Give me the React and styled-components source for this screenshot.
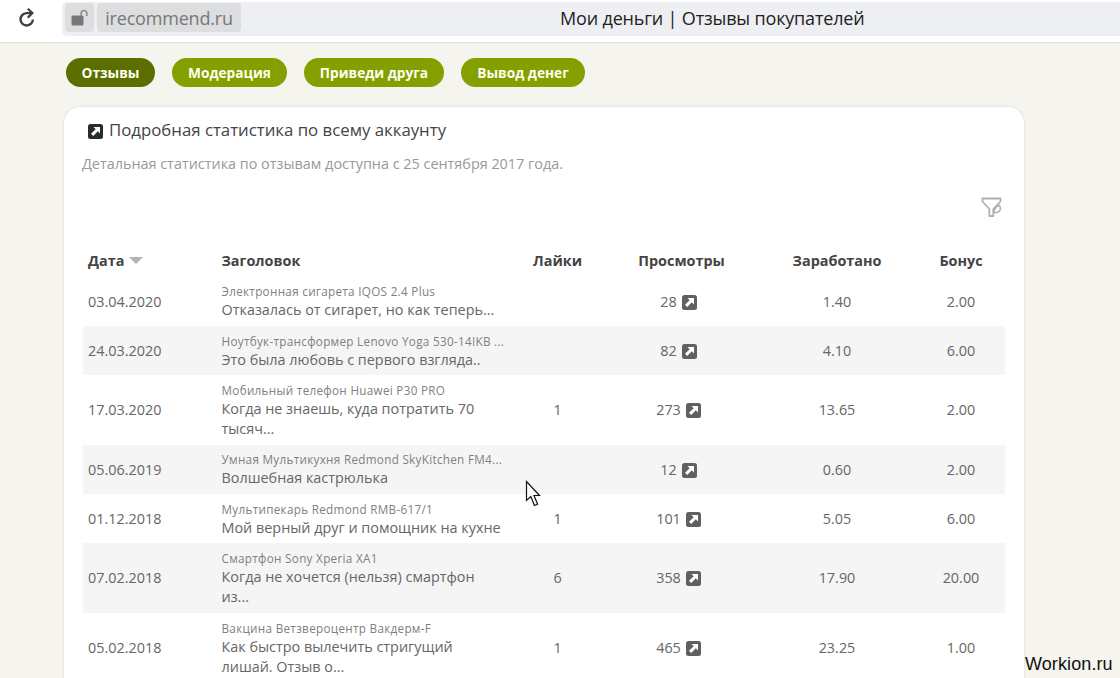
import React from "react";
import styled, { createGlobalStyle } from "styled-components";

const GlobalStyle = createGlobalStyle`
  * {
    box-sizing: border-box;
  }

  body {
    margin: 0;
    overflow: hidden;
    background-color: #f5f4ef;
    font-family: "Open Sans", "Noto Sans", sans-serif;
    color: #666666;
  }
`;

const Page = styled.div`
  position: relative;
  height: 678px;
  overflow: hidden;
`;

const StyledBrowserBar = styled.header`
  display: flex;
  height: 43px;
  padding: 2px 0 6px 18px;
  background-color: #ffffff;
  border-bottom: 1px solid #dddcda;
  font-size: 18px;

  & > .reload {
    flex: none;
    margin: 6px 26px 0 0;
  }
`;

const AddressBar = styled.div`
  display: flex;
  flex: 1;
  height: 34px;
  padding: 1px 0 0 3px;
  background-color: #eeeff2;
  border-radius: 5px 0 0 5px;
`;

const Chip = styled.div`
  display: flex;
  align-items: center;
  justify-content: center;
  width: ${(props) => props.$width}px;
  height: 29px;
  margin-right: 3px;
  background-color: #dddee0;
  border-radius: 4px;
  color: #777777;
  letter-spacing: -0.2px;
  line-height: 30px;
`;

const PageTitle = styled.div`
  margin-left: 316px;
  color: #222222;
  letter-spacing: -0.17px;
  line-height: 30px;
  white-space: nowrap;
`;

const Tabs = styled.nav`
  display: flex;
  gap: 17px;
  padding: 15px 0 0 66px;
`;

const Tab = styled.button`
  width: ${(props) => props.$width}px;
  height: 29px;
  padding: 0;
  border: none;
  border-radius: 15px;
  background-color: ${(props) => (props.$active ? "#5b6f00" : "#84a000")};
  color: #fffff0;
  font: bold 13.7px/29px "Open Sans", sans-serif;
  white-space: nowrap;
`;

const Card = styled.main`
  width: 960px;
  height: 640px;
  margin: 20px 0 0 64px;
  padding: 11px 19px;
  background-color: #ffffff;
  border-radius: 16px;
  box-shadow: 0 0 3px rgba(0, 0, 0, 0.12);
`;

const CardTitle = styled.h1`
  display: flex;
  align-items: center;
  gap: 6px;
  height: 24px;
  margin: 0 0 0 5px;
  color: #444444;
  font-size: 16.8px;
  font-weight: 400;
  line-height: 22px;
  white-space: nowrap;

  & > svg {
    margin-top: 2px;
  }
`;

const Note = styled.p`
  margin: 12px 0 0 -1px;
  color: #999999;
  font-size: 14.4px;
  line-height: 20px;
`;

const FilterRow = styled.div`
  display: flex;
  justify-content: flex-end;
  height: 70px;
  padding: 23px 3px 0;
`;

const Row = styled.div`
  display: grid;
  grid-template-columns: 133.5px 291.5px 99px 149px 162px 86px;
  align-items: center;
  height: ${(props) => props.$height}px;
  background-color: ${(props) => (props.$striped ? "#f5f5f5" : "transparent")};
`;

const HeadRow = styled(Row)`
  color: #444444;
  font-weight: bold;
`;

const Cell = styled.div`
  display: flex;
  align-items: center;
  justify-content: ${(props) => (props.$left ? "flex-start" : "center")};
  padding-left: ${(props) => (props.$left ? 5 : 0)}px;
  font-size: 14.4px;
  line-height: 20px;
  white-space: nowrap;
`;

const Views = styled(Cell)`
  gap: 5px;
  padding-right: 6px;

  & > svg {
    margin-top: 1px;
  }
`;

const SortArrow = styled.span`
  margin: -1px 0 0 5px;
  border: 7px solid transparent;
  border-top-color: #b3b3b3;
  border-bottom: none;
`;

const Review = styled.div`
  padding: 1px 0 0 5px;
  white-space: pre;

  & > .product {
    height: 17px;
    color: #808080;
    font-size: 11.7px;
    letter-spacing: 0.3px;
    line-height: 17px;
  }

  & > .title {
    font-size: 14.4px;
    line-height: 20.2px;
  }
`;

const Cursor = styled.svg`
  position: absolute;
  left: 525px;
  top: 480px;
`;

const Watermark = styled.div`
  position: absolute;
  left: 1025px;
  top: 654px;
  color: #111111;
  font: 18px/20px "Liberation Sans", Arial, sans-serif;
  letter-spacing: 0.1px;
`;

const reviews = [
  { date: "03.04.2020", product: "Электронная сигарета IQOS 2.4 Plus", title: "Отказалась от сигарет, но как теперь...", likes: "", views: 28, earned: "1.40", bonus: "2.00" },
  { date: "24.03.2020", product: "Ноутбук-трансформер Lenovo Yoga 530-14IKB ...", title: "Это была любовь с первого взгляда..", likes: "", views: 82, earned: "4.10", bonus: "6.00" },
  { date: "17.03.2020", product: "Мобильный телефон Huawei P30 PRO", title: "Когда не знаешь, куда потратить 70\nтысяч...", likes: "1", views: 273, earned: "13.65", bonus: "2.00" },
  { date: "05.06.2019", product: "Умная Мультикухня Redmond SkyKitchen FM4...", title: "Волшебная кастрюлька", likes: "", views: 12, earned: "0.60", bonus: "2.00" },
  { date: "01.12.2018", product: "Мультипекарь Redmond RMB-617/1", title: "Мой верный друг и помощник на кухне", likes: "1", views: 101, earned: "5.05", bonus: "6.00" },
  { date: "07.02.2018", product: "Смартфон Sony Xperia XA1", title: "Когда не хочется (нельзя) смартфон\nиз...", likes: "6", views: 358, earned: "17.90", bonus: "20.00" },
  { date: "05.02.2018", product: "Вакцина Ветзвероцентр Вакдерм-F", title: "Как быстро вылечить стригущий\nлишай. Отзыв о...", likes: "1", views: 465, earned: "23.25", bonus: "1.00" },
];

function LinkIcon({ color }) {
  return (
    <svg width="15" height="15" viewBox="0 0 15 15">
      <rect width="15" height="15" rx="2.5" fill={color} />
      <path d="M5.5 3H12V9.5L9.8 7.3L5.2 12L3 9.8L7.7 5.2Z" fill="#ffffff" />
    </svg>
  );
}

function ReloadIcon() {
  return (
    <svg className="reload" width="18" height="20" viewBox="0 0 18 20" fill="none">
      <path d="M13 5.1H8.4A6.2 6.2 0 1 0 14.9 11.4" stroke="#3b4245" strokeWidth="2.4" />
      <path d="M9.8 0.8L14.4 5.1L9.8 9.6" stroke="#3b4245" strokeWidth="2.2" />
    </svg>
  );
}

function LockIcon() {
  return (
    <svg width="17" height="18" viewBox="0 0 17 18" fill="none">
      <rect x="0.5" y="6.5" width="12" height="10" rx="1.5" fill="#777777" />
      <path d="M10.2 7V4.3A2.8 2.8 0 0 1 15.8 4.3V7" stroke="#8a8a8a" strokeWidth="1.6" />
    </svg>
  );
}

function FilterIcon() {
  return (
    <svg width="21" height="21" viewBox="0 0 21 21" fill="none" stroke="#b0b0b0" strokeWidth="1.8" strokeLinejoin="round">
      <path d="M1.5 1.5H19.5V4.5L12.3 12V19H8.3V12L1.5 4.5Z" />
      <path d="M18 8Q20.8 11.8 18 14.4Q15.8 16 13 15.2Q13 11.8 18 8" strokeWidth="1.5" />
    </svg>
  );
}

function BrowserBar() {
  return (
    <StyledBrowserBar>
      <ReloadIcon />
      <AddressBar>
        <Chip $width={29}>
          <LockIcon />
        </Chip>
        <Chip $width={144}>irecommend.ru</Chip>
        <PageTitle>Мои деньги | Отзывы покупателей</PageTitle>
      </AddressBar>
    </StyledBrowserBar>
  );
}

function ReviewRow({ review, striped }) {
  return (
    <Row $striped={striped} $height={review.title.includes("\n") ? 69.6 : 49.2}>
      <Cell $left>{review.date}</Cell>
      <Review>
        <div className="product">{review.product}</div>
        <div className="title">{review.title}</div>
      </Review>
      <Cell>{review.likes}</Cell>
      <Views>
        {review.views}
        <LinkIcon color="#606060" />
      </Views>
      <Cell>{review.earned}</Cell>
      <Cell>{review.bonus}</Cell>
    </Row>
  );
}

function App() {
  return (
    <Page>
      <GlobalStyle />
      <BrowserBar />
      <Tabs>
        <Tab $width={89} $active>Отзывы</Tab>
        <Tab $width={115}>Модерация</Tab>
        <Tab $width={140}>Приведи друга</Tab>
        <Tab $width={124}>Вывод денег</Tab>
      </Tabs>
      <Card>
        <CardTitle>
          <LinkIcon color="#2b2b2b" />
          Подробная статистика по всему аккаунту
        </CardTitle>
        <Note>Детальная статистика по отзывам доступна с 25 сентября 2017 года.</Note>
        <FilterRow>
          <FilterIcon />
        </FilterRow>
        <HeadRow $height={33}>
          <Cell $left>
            Дата
            <SortArrow />
          </Cell>
          <Cell $left>Заголовок</Cell>
          <Cell>Лайки</Cell>
          <Cell>Просмотры</Cell>
          <Cell>Заработано</Cell>
          <Cell>Бонус</Cell>
        </HeadRow>
        {reviews.map((review, i) => (
          <ReviewRow key={review.date} review={review} striped={i % 2 === 1} />
        ))}
      </Card>
      <Cursor width="17" height="28" viewBox="0 0 17 28">
        <path
          d="M1.5 1.5V20.5L5.8 16.6L9.4 25.5L12.6 24.2L9 15.5H14.5Z"
          fill="#ffffff"
          stroke="#111111"
          strokeWidth="1.2"
        />
      </Cursor>
      <Watermark>Workion.ru</Watermark>
    </Page>
  );
}

export default App;
